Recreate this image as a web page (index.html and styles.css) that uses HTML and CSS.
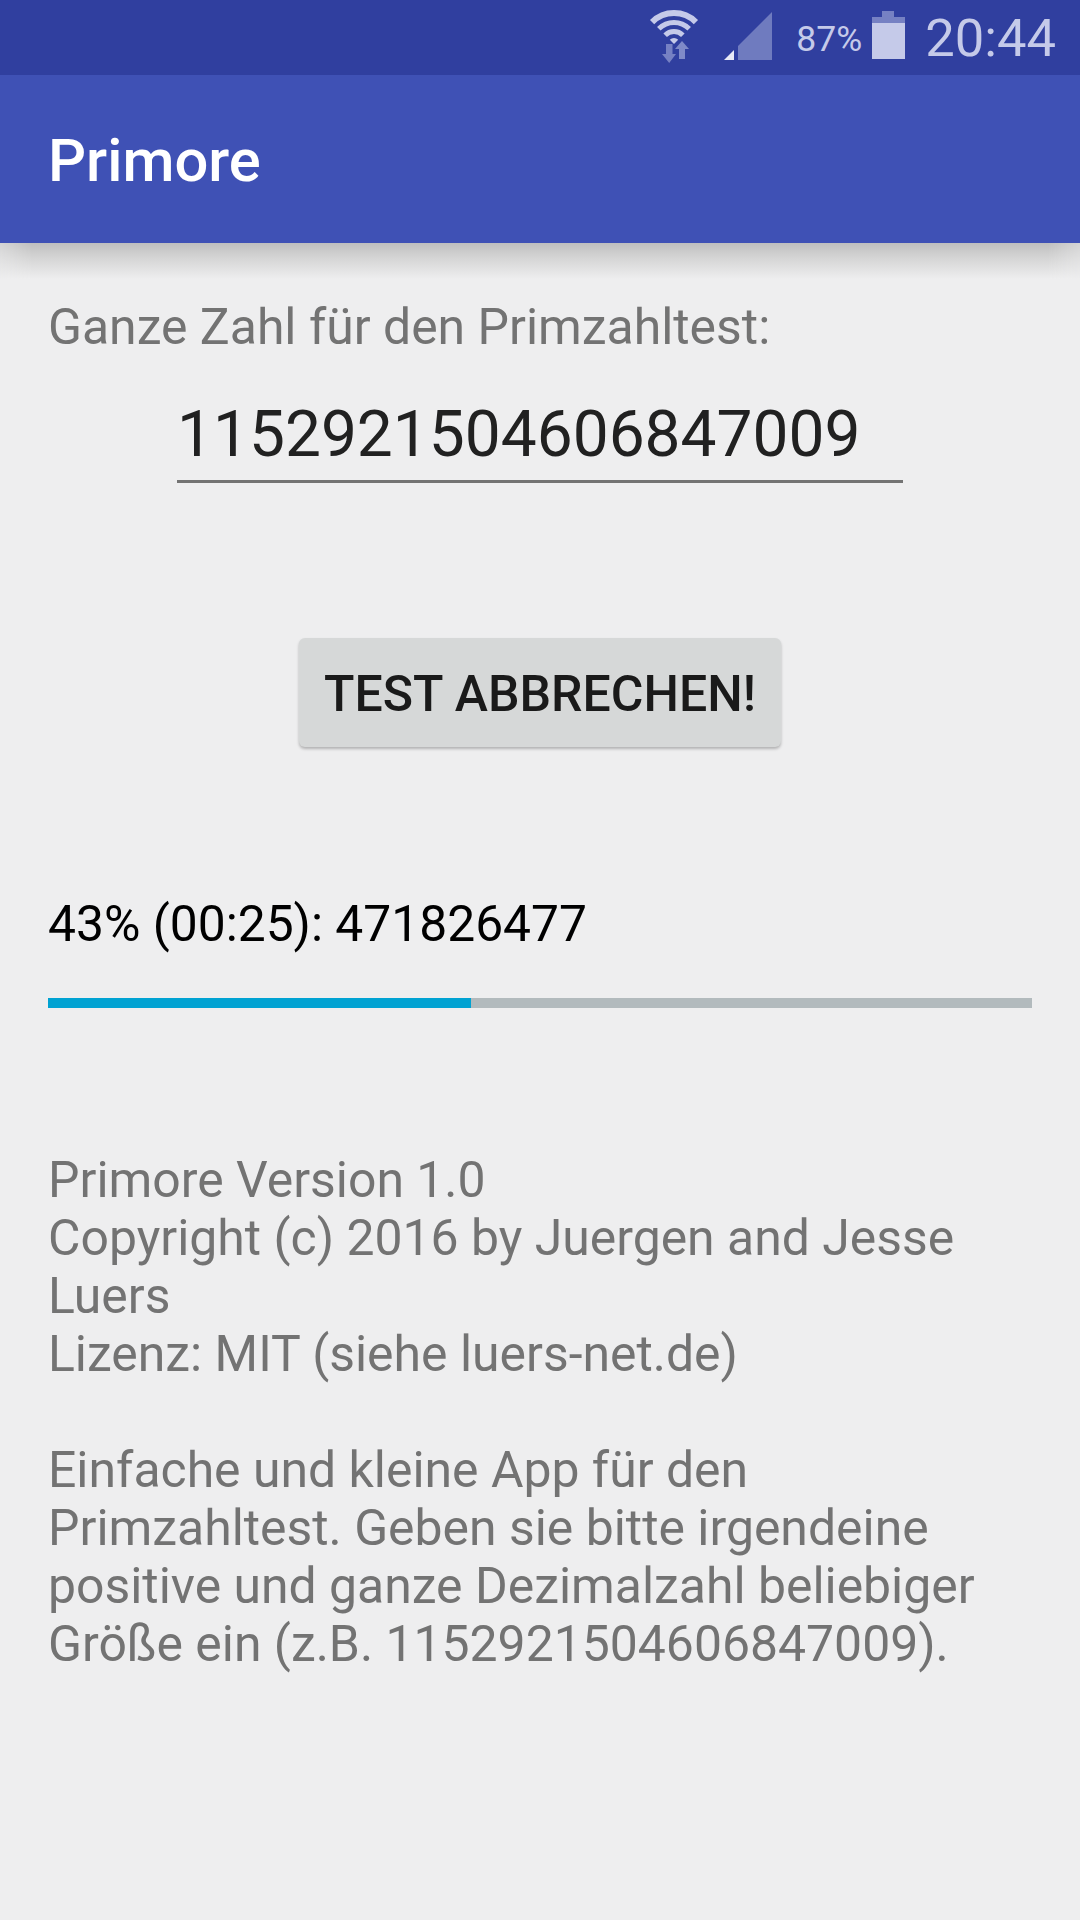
FILE: index.html
```html
<!DOCTYPE html>
<html lang="de">
<head>
<meta charset="utf-8">
<title>Primore</title>
<link rel="stylesheet" href="styles.css">
</head>
<body>
<div class="status">
  <svg class="ic-wifi" width="50" height="53" viewBox="0 0 50 53">
    <g fill="none" stroke="#c5cae9">
      <path d="M3.1 12.1 A31 31 0 0 1 46.9 12.1" stroke-width="6"/>
      <path d="M9.8 18.8 A21.5 21.5 0 0 1 40.2 18.8" stroke-width="5"/>
      <path d="M16.16 25.16 A12.5 12.5 0 0 1 33.84 25.16" stroke-width="5"/>
    </g>
    <path d="M25 34 L20.8 29.8 A6 6 0 0 1 29.2 29.8 Z" fill="#c5cae9"/>
    <path d="M17 34 H23.5 V44 H27 L20.2 53 L13 44 H17 Z" fill="#7681c3"/>
    <path d="M30 49 V39 H26 L33 31 L40 39 H36 V49 Z" fill="#7f8ac8"/>
  </svg>
  <svg class="ic-signal" width="48" height="48" viewBox="0 0 48 48">
    <path d="M48 0 V48 H14 V34 Z" fill="#6f7bbf"/>
    <path d="M10 38 V48 H0 Z" fill="#e8eaf6"/>
  </svg>
  <span class="pct">87%</span>
  <svg class="ic-batt" width="33" height="48" viewBox="0 0 33 48">
    <path d="M10 0 H22 V6 H33 V12 H0 V6 H10 Z" fill="#7681c3"/>
    <path d="M0 12 H33 V48 H0 Z" fill="#c5cae9"/>
  </svg>
  <span class="clock">20:44</span>
</div>
<header class="appbar">Primore</header>
<main class="content">
  <p class="label">Ganze Zahl für den Primzahltest:</p>
  <div class="input">1152921504606847009</div>
  <div class="btn-row"><button class="btn">TEST ABBRECHEN!</button></div>
  <p class="progress-text">43% (00:25): 471826477</p>
  <div class="bar"><div class="fill" style="width:43%"></div></div>
  <p class="info">Primore Version 1.0<br>Copyright (c) 2016 by Juergen and Jesse Luers<br>Lizenz: MIT (siehe luers-net.de)<br><br>Einfache und kleine App für den Primzahltest. Geben sie bitte irgendeine positive und ganze Dezimalzahl beliebiger Größe ein (z.B. 1152921504606847009).</p>
</main>
</body>
</html>
```
FILE: styles.css
```css
html, body { margin: 0; padding: 0; }
body { width: 1080px; height: 1920px; background: #eeeeef; font-family: Roboto, sans-serif; overflow: hidden; }
.status { height: 75px; background: #303f9f; display: flex; align-items: center; justify-content: flex-end; padding-right: 24px; color: #c5cae9; box-sizing: border-box; }
.ic-wifi { margin-right: 25px; margin-bottom: 3px; }
.ic-signal { margin-right: 24px; margin-bottom: 3px; }
.pct { font-size: 35.5px; margin-right: 10px; margin-top: 2px; }
.ic-batt { margin-right: 20px; margin-bottom: 5px; }
.clock { font-size: 52.5px; }
.appbar { height: 168px; background: #3f51b5; color: #fff; font-size: 59.7px; font-weight: 500; line-height: 172px; padding-left: 48px; position: relative; }
.appbar::after { content: ""; position: absolute; left: 0; right: 0; top: 100%; height: 36px; background: linear-gradient(to bottom, #bfbfbf, #d4d4d4 40%, #eeeeef); -webkit-mask-image: linear-gradient(to right, rgba(0,0,0,.55), #000 32px, #000 calc(100% - 32px), rgba(0,0,0,.55)); mask-image: linear-gradient(to right, rgba(0,0,0,.55), #000 32px, #000 calc(100% - 32px), rgba(0,0,0,.55)); }
.content { padding: 0 48px; }
.label { margin: 0; padding-top: 50px; font-size: 49.9px; line-height: 68px; color: #737373; }
.input { width: 726px; margin: 39px 0 0 129px; box-sizing: border-box; height: 83px; font-size: 64px; line-height: 70px; color: #212121; text-align: left; border-bottom: 3px solid #737373; }
.btn-row { display: flex; justify-content: center; margin-top: 155px; }
.btn { width: 482px; height: 109px; background: #d6d8d8; border: 0; border-radius: 6px; font: 500 50px Roboto, sans-serif; color: #1a1a1a; box-shadow: 0 2px 3px rgba(0,0,0,.25); padding: 2px 0 0; }
.progress-text { margin: 0; padding-top: 143px; font-size: 49.75px; line-height: 68px; color: #000; }
.bar { height: 10px; margin-top: 40px; background: #b2babd; }
.fill { height: 100%; background: #00a2d2; }
.info { margin: 0; padding-top: 143px; font-size: 49.9px; line-height: 58px; color: #737373; }
```
